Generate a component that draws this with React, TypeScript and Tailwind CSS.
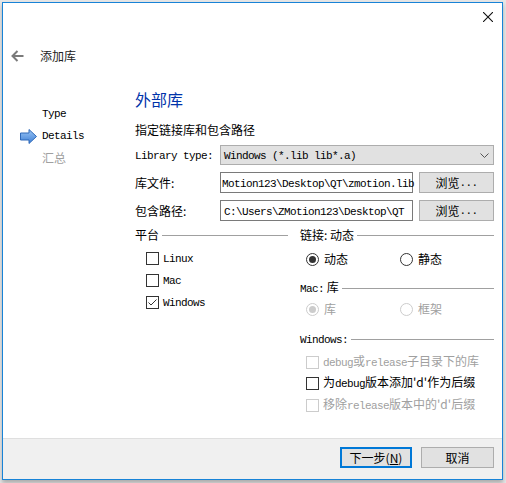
import React from 'react';

const M: React.FC<{ children: React.ReactNode }> = ({ children }) => (
  <span className="font-['Liberation_Mono'] text-[11px] tracking-[-0.6px]">{children}</span>
);

const GroupHead: React.FC<{ children: React.ReactNode }> = ({ children }) => (
  <div className="flex items-center h-[16px]">
    <span className="whitespace-nowrap">{children}</span>
    <div className="flex-1 h-px bg-[#a0a0a0] ml-[3px]" />
  </div>
);

const CheckBox: React.FC<{ checked?: boolean; disabled?: boolean }> = ({ checked, disabled }) => (
  <div className={`w-[13px] h-[13px] border bg-white flex items-center justify-center ${disabled ? 'border-[#cccccc]' : 'border-[#333333]'}`}>
    {checked && (
      <svg width="11" height="11" viewBox="0 0 11 11">
        <path d="M1.5 5.5 L4 8 L9.5 2.5" fill="none" stroke="#333" strokeWidth="1" />
      </svg>
    )}
  </div>
);

const Radio: React.FC<{ checked?: boolean; disabled?: boolean }> = ({ checked, disabled }) => (
  <svg width="13" height="13" viewBox="0 0 13 13">
    <circle cx="6.5" cy="6.5" r="6" fill="white" stroke={disabled ? '#cccccc' : '#333333'} strokeWidth="1" />
    {checked && <circle cx="6.5" cy="6.5" r="3.5" fill={disabled ? '#cccccc' : '#333333'} />}
  </svg>
);

export default function App() {
  return (
    <div className="w-[506px] h-[483px] bg-[#e6e6e6] pt-[2px] pl-[2px] font-['Noto_Sans_CJK_SC',sans-serif] text-[12px] leading-[16px] text-black">
      <div className="w-[501px] h-[478px] border border-[#1883d7] bg-white flex flex-col shadow-[0_3px_4px_rgba(0,0,0,0.25)]">
        {/* title bar */}
        <div className="h-[30px] flex justify-end pt-[9px] pr-[9px]">
          <svg width="10" height="10" viewBox="0 0 10 10">
            <path d="M0 0 L10 10 M10 0 L0 10" stroke="#111" strokeWidth="1.1" />
          </svg>
        </div>
        {/* header */}
        <div className="h-[46px] flex items-center pl-[8px]">
          <svg width="13" height="12" viewBox="0 0 13 12">
            <path d="M12.5 6 H1.5 M6.5 1 L1.5 6 L6.5 11" fill="none" stroke="#7a7a7a" strokeWidth="2" />
          </svg>
          <span className="ml-[16px] text-[12px] text-[#222]">添加库</span>
        </div>
        {/* body */}
        <div className="h-[359px] flex">
          <div className="w-[132px] pt-[24px]">
            <div className="h-[22px] flex items-center pl-[39px]"><M>Type</M></div>
            <div className="h-[22px] flex items-center pl-[17px]">
              <svg width="17" height="15" viewBox="0 0 17 15" className="mr-[5px]">
                <defs>
                  <linearGradient id="ag" x1="0" y1="0" x2="0" y2="1">
                    <stop offset="0" stopColor="#9cc6f5" />
                    <stop offset="1" stopColor="#3d7fd6" />
                  </linearGradient>
                </defs>
                <path d="M0.5 4 H9 V0.5 L16.5 7.5 L9 14.5 V11 H0.5 Z" fill="url(#ag)" stroke="#2f69b8" strokeWidth="1" />
              </svg>
              <M>Details</M>
            </div>
            <div className="h-[22px] flex items-center pl-[39px] text-[#a0a0a0]">汇总</div>
          </div>
          <div className="flex-1 pr-[8px] pt-[10px]">
            <div className="text-[16px] leading-[20px] text-[#0033aa]">外部库</div>
            <div className="mt-[13px]">指定链接库和包含路径</div>
            <div className="mt-[7px] flex items-center h-[20px]">
              <div className="w-[85px]"><M>Library type:</M></div>
              <div className="flex-1 h-[20px] bg-[#e1e1e1] border border-[#adadad] flex items-center pl-[3px] pr-[4px]">
                <span className="flex-1"><M>Windows (*.lib lib*.a)</M></span>
                <svg width="9" height="5" viewBox="0 0 9 5">
                  <path d="M0.5 0.5 L4.5 4.5 L8.5 0.5" fill="none" stroke="#555" strokeWidth="1" />
                </svg>
              </div>
            </div>
            <div className="mt-[7px] flex items-center h-[21px]">
              <div className="w-[85px]">库文件:</div>
              <div className="w-[193px] h-[21px] border border-[#7a7a7a] flex items-center pl-[1px]">
                <span className="whitespace-nowrap"><M>Motion123\Desktop\QT\zmotion.lib</M></span>
              </div>
              <div className="ml-[6px] flex-1 h-[21px] bg-[#e1e1e1] border border-[#adadad] flex items-center justify-center">浏览<M>...</M></div>
            </div>
            <div className="mt-[7px] flex items-center h-[21px]">
              <div className="w-[85px]">包含路径:</div>
              <div className="w-[193px] h-[21px] border border-[#7a7a7a] flex items-center overflow-hidden pl-[3px]">
                <span className="whitespace-nowrap"><M>C:\Users\ZMotion123\Desktop\QT</M></span>
              </div>
              <div className="ml-[6px] flex-1 h-[21px] bg-[#e1e1e1] border border-[#adadad] flex items-center justify-center">浏览<M>...</M></div>
            </div>
            <div className="mt-[6px] flex">
              <div className="w-[153px]">
                <GroupHead>平台</GroupHead>
                <div className="pl-[11px] mt-[9px] flex flex-col gap-[9px]">
                  <div className="flex items-center gap-[4px] h-[13px]"><CheckBox /><M>Linux</M></div>
                  <div className="flex items-center gap-[4px] h-[13px]"><CheckBox /><M>Mac</M></div>
                  <div className="flex items-center gap-[4px] h-[13px]"><CheckBox checked /><M>Windows</M></div>
                </div>
              </div>
              <div className="ml-[12px] flex-1">
                <GroupHead>链接: 动态</GroupHead>
                <div className="mt-[8px] flex items-center h-[16px] pl-[6px]">
                  <div className="w-[94px] flex items-center gap-[5px]"><Radio checked />动态</div>
                  <div className="flex items-center gap-[5px]"><Radio />静态</div>
                </div>
                <div className="mt-[13px]"><GroupHead><M>Mac:</M> 库</GroupHead></div>
                <div className="mt-[5px] flex items-center h-[16px] pl-[6px] text-[#a0a0a0]">
                  <div className="w-[94px] flex items-center gap-[5px]"><Radio checked disabled />库</div>
                  <div className="flex items-center gap-[5px]"><Radio disabled />框架</div>
                </div>
                <div className="mt-[14px]"><GroupHead><M>Windows:</M></GroupHead></div>
                <div className="pl-[6px]">
                  <div className="mt-[7px] h-[16px] flex items-center gap-[4px] text-[#a0a0a0]"><CheckBox disabled /><span><M>debug</M>或<M>release</M>子目录下的库</span></div>
                  <div className="mt-[5px] h-[16px] flex items-center gap-[4px]"><CheckBox /><span>为<M>debug</M>版本添加'd'作为后缀</span></div>
                  <div className="mt-[6px] h-[16px] flex items-center gap-[4px] text-[#a0a0a0]"><CheckBox disabled /><span>移除<M>release</M>版本中的'd'后缀</span></div>
                </div>
              </div>
            </div>
          </div>
        </div>
        {/* footer */}
        <div className="h-[41px] border-t border-[#dfdfdf] bg-[#f0f0f0] flex justify-end items-start pt-[8px] pr-[8px] gap-[9px]">
          <div className="w-[72px] h-[21px] bg-[#e1e1e1] border-2 border-[#0078d7] flex items-center justify-center">下一步(<span className="underline">N</span>)</div>
          <div className="w-[73px] h-[21px] bg-[#e1e1e1] border border-[#adadad] flex items-center justify-center">取消</div>
        </div>
      </div>
    </div>
  );
}
